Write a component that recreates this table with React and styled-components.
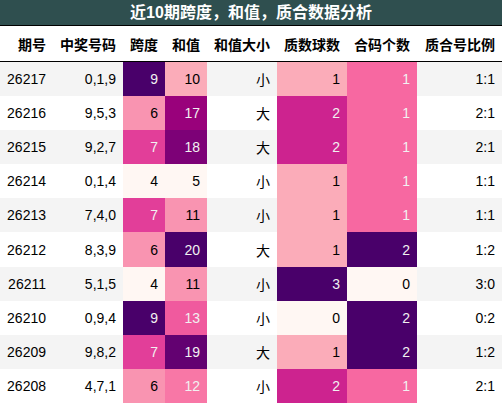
import React from 'react'
import styled, { createGlobalStyle } from 'styled-components'

const GlobalStyle = createGlobalStyle`
  html, body {
    margin: 0;
    padding: 0;
    background: #ffffff;
  }
  body {
    font-family: "Liberation Sans", "Noto Sans CJK SC", sans-serif;
  }
`

// RdPu colour stops
const stops = ['#fff7f3', '#fde0dd', '#fcc5c0', '#fa9fb5', '#f768a1', '#dd3497', '#ae017e', '#7a0177', '#49006a']

const hexToRgb = (h) => [1, 3, 5].map((i) => parseInt(h.slice(i, i + 2), 16))

const rdpu = (t) => {
  const x = Math.max(0, Math.min(1, t)) * (stops.length - 1)
  const i = Math.min(Math.floor(x), stops.length - 2)
  const f = x - i
  const a = hexToRgb(stops[i])
  const b = hexToRgb(stops[i + 1])
  return a.map((v, k) => Math.round(v + (b[k] - v) * f))
}

const luminance = ([r, g, b]) => {
  const c = [r, g, b].map((v) => {
    v = v / 255
    return v <= 0.03928 ? v / 12.92 : Math.pow((v + 0.055) / 1.055, 2.4)
  })
  return 0.2126 * c[0] + 0.7152 * c[1] + 0.0722 * c[2]
}

const rows = [
  ['26217', '0,1,9', 9, 10, '小', 1, 1, '1:1'],
  ['26216', '9,5,3', 6, 17, '大', 2, 1, '2:1'],
  ['26215', '9,2,7', 7, 18, '大', 2, 1, '2:1'],
  ['26214', '0,1,4', 4, 5, '小', 1, 1, '1:1'],
  ['26213', '7,4,0', 7, 11, '小', 1, 1, '1:1'],
  ['26212', '8,3,9', 6, 20, '大', 1, 2, '1:2'],
  ['26211', '5,1,5', 4, 11, '小', 3, 0, '3:0'],
  ['26210', '0,9,4', 9, 13, '小', 0, 2, '0:2'],
  ['26209', '9,8,2', 7, 19, '大', 1, 2, '1:2'],
  ['26208', '4,7,1', 6, 12, '小', 2, 1, '2:1'],
]

const headers = ['期号', '中奖号码', '跨度', '和值', '和值大小', '质数球数', '合码个数', '质合号比例']
const widths = [53, 70, 42, 42, 70, 70, 70, 85]
const gradientCols = [2, 3, 5, 6]

const ranges = {}
gradientCols.forEach((c) => {
  const vals = rows.map((r) => r[c])
  ranges[c] = [Math.min(...vals), Math.max(...vals)]
})

const cellColors = (c, v) => {
  const [lo, hi] = ranges[c]
  const rgb = rdpu((v - lo) / (hi - lo))
  return {
    bg: `rgb(${rgb.join(',')})`,
    fg: luminance(rgb) < 0.408 ? '#f1f1f1' : '#000000',
  }
}

const App = () => {
  return (
    <>
      <GlobalStyle />
      <Wrap>
        <Title>近10期跨度，和值，质合数据分析</Title>
        <Table>
          <colgroup>
            {widths.map((w, i) => (
              <col key={i} style={{ width: w }} />
            ))}
          </colgroup>
          <thead>
            <tr>
              {headers.map((h) => (
                <Th key={h}>{h}</Th>
              ))}
            </tr>
          </thead>
          <tbody>
            {rows.map((r, ri) => (
              <Row key={r[0]} $striped={ri % 2 === 0}>
                {r.map((v, ci) => {
                  if (gradientCols.includes(ci)) {
                    const { bg, fg } = cellColors(ci, v)
                    return (
                      <Td key={ci} $bg={bg} $fg={fg}>
                        {v}
                      </Td>
                    )
                  }
                  return <Td key={ci}>{v}</Td>
                })}
              </Row>
            ))}
          </tbody>
        </Table>
      </Wrap>
    </>
  )
}

const Wrap = styled.div`
  width: 502px;
  height: 403px;
  overflow: hidden;
  background: #ffffff;
`

const Title = styled.div`
  height: 25px;
  background: #2f4f4f;
  border-bottom: 1px solid #000000;
  color: #ffffff;
  font-family: "Liberation Sans", "Noto Sans CJK SC", sans-serif;
  font-weight: 700;
  font-size: 16px;
  line-height: 25px;
  text-align: center;
`

const Table = styled.table`
  width: 502px;
  table-layout: fixed;
  border-collapse: collapse;
  border-spacing: 0;
  font-size: 14px;
  color: #000000;
`

const Th = styled.th`
  height: 35px;
  padding: 0 7px 0 0;
  text-align: right;
  font-weight: 700;
  font-size: 14px;
  font-family: "Noto Sans CJK SC", sans-serif;
  border-bottom: 1px solid #000000;
  white-space: nowrap;
`

const Row = styled.tr`
  height: 34.2px;
  background: ${(p) => (p.$striped ? '#f4f4f4' : '#ffffff')};
`

const Td = styled.td`
  padding: 0 7px 0 0;
  text-align: right;
  white-space: nowrap;
  background: ${(p) => p.$bg || 'transparent'};
  color: ${(p) => p.$fg || '#000000'};
  font-family: "Liberation Sans", "Noto Sans CJK SC", sans-serif;
`

export default App
